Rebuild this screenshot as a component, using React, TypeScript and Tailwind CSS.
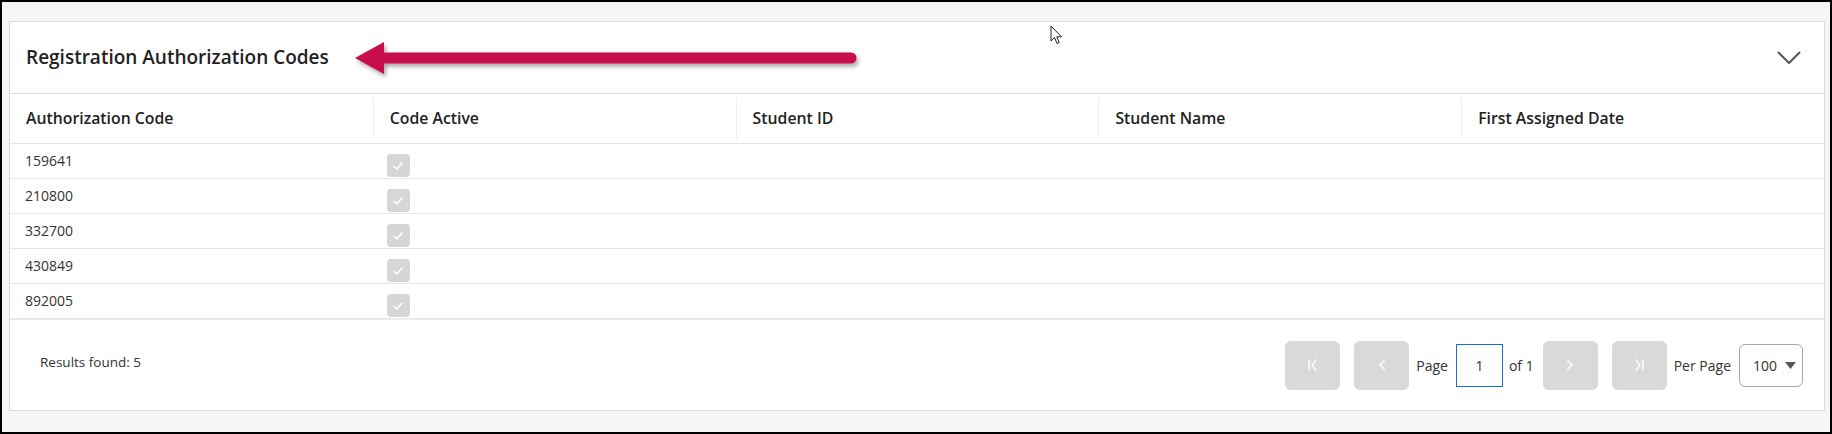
import React from 'react';

interface CodeRow {
  code: string;
  active: boolean;
}

const rows: CodeRow[] = [
  { code: '159641', active: true },
  { code: '210800', active: true },
  { code: '332700', active: true },
  { code: '430849', active: true },
  { code: '892005', active: true },
];

const columns = ['Authorization Code', 'Code Active', 'Student ID', 'Student Name', 'First Assigned Date'];

const PageButton: React.FC<{ kind: 'first' | 'prev' | 'next' | 'last' }> = ({ kind }) => (
  <button className="w-[55px] h-[49px] rounded-[6px] bg-[#d9d9d9] flex items-center justify-center cursor-not-allowed">
    <svg width="14" height="14" viewBox="0 0 14 14" fill="none" stroke="#f5f5f5" strokeWidth="2" strokeLinecap="round" strokeLinejoin="round">
      {kind === 'first' && (
        <>
          <line x1="3" y1="2" x2="3" y2="12" />
          <polyline points="10,2 6,7 10,12" />
        </>
      )}
      {kind === 'prev' && <polyline points="9,3 5,7 9,11" />}
      {kind === 'next' && <polyline points="5,3 9,7 5,11" />}
      {kind === 'last' && (
        <>
          <polyline points="4,2 8,7 4,12" />
          <line x1="11" y1="2" x2="11" y2="12" />
        </>
      )}
    </svg>
  </button>
);

const Checkbox: React.FC = () => (
  <div className="w-[23px] h-[23px] rounded-[4px] bg-[#d6d6d6] flex items-center justify-center mt-[4px] -ml-[2px]">
    <svg width="12" height="10" viewBox="0 0 12 10" fill="none" stroke="#ffffff" strokeWidth="1.6" strokeLinecap="round" strokeLinejoin="round">
      <polyline points="2,5.5 4.8,8 10,2" />
    </svg>
  </div>
);

export default function App() {
  return (
    <div className="w-[1832px] h-[434px] border-2 border-black bg-[#f5f5f5] pl-[7px] pr-[5px] pt-[19px] font-['Open_Sans',sans-serif] text-[#222]">
      <div className="relative bg-white border border-[#dcdcdc] h-[390px] flex flex-col">
        {/* Header */}
        <div className="h-[72px] border-b border-[#dedede] flex items-center justify-between pl-[16px] pr-[23px]">
          <h2 className="text-[19px] font-semibold text-[#222]">Registration Authorization Codes</h2>
          <svg width="24" height="14" viewBox="0 0 24 14" fill="none" stroke="#555" strokeWidth="2" strokeLinecap="round" strokeLinejoin="round">
            <polyline points="1.5,1.5 12,12 22.5,1.5" />
          </svg>
        </div>

        {/* annotation arrow */}
        <svg className="absolute left-[340px] top-[15px]" width="520" height="44" viewBox="0 0 520 44" fill="none">
          <defs>
            <filter id="arrowShadow" x="-5%" y="-40%" width="110%" height="180%">
              <feDropShadow dx="2" dy="3" stdDeviation="2" floodColor="#000" floodOpacity="0.35" />
            </filter>
          </defs>
          <g filter="url(#arrowShadow)">
            <line x1="32" y1="21" x2="501" y2="21" stroke="#c70a4b" strokeWidth="11" strokeLinecap="round" />
            <polygon points="5,21 34,5 34,37" fill="#c70a4b" />
          </g>
        </svg>

        {/* mouse cursor */}
        <svg className="absolute left-[1040px] top-[3px]" width="13" height="20" viewBox="0 0 13 20">
          <path d="M1 1 L1 16 L4.5 12.5 L7 18.5 L9.2 17.6 L6.8 11.8 L11.5 11.8 Z" fill="#fff" stroke="#222" strokeWidth="1" strokeLinejoin="round" />
        </svg>

        {/* Column headers */}
        <div className="grid grid-cols-5 h-[50px] border-b border-[#e6e6e6]">
          {columns.map((col, i) => (
            <div
              key={col}
              className={`flex items-center px-4 my-[4px] text-[15.8px] font-semibold text-[#222] ${i > 0 ? 'border-l border-[#efefef]' : ''}`}
            >
              {col}
            </div>
          ))}
        </div>

        {/* Rows */}
        {rows.map((row) => (
          <div key={row.code} className="grid grid-cols-5 h-[35px] border-b border-[#e8e8e8] text-[14px] text-[#333]">
            <div className="px-[15px] pt-[7px] leading-[20px]">{row.code}</div>
            <div className="px-4 pt-[6px]">{row.active && <Checkbox />}</div>
            <div />
            <div />
            <div />
          </div>
        ))}

        {/* Footer */}
        <div className="flex-1 border-t border-[#ececec] flex items-center justify-between pl-[30px] pr-[21px] text-[14px] text-[#333]">
          <span className="-mt-[6px] text-[13.5px]">Results found: 5</span>
          <div className="flex items-center">
            <PageButton kind="first" />
            <div className="ml-[14px]">
              <PageButton kind="prev" />
            </div>
            <span className="ml-[7px] text-[14px]">Page</span>
            <div className="ml-[8px] w-[47px] h-[43px] border border-[#1a6fc9] flex items-center justify-center text-[14px]">1</div>
            <span className="ml-[6px] text-[14px]">of 1</span>
            <div className="ml-[9px]">
              <PageButton kind="next" />
            </div>
            <div className="ml-[14px]">
              <PageButton kind="last" />
            </div>
            <span className="ml-[7px] text-[14px]">Per Page</span>
            <div className="ml-[8px] w-[64px] h-[43px] border border-[#aaaaaa] rounded-[6px] flex items-center justify-between pl-[13px] pr-[6px] text-[14px]">
              <span>100</span>
              <svg width="11" height="7" viewBox="0 0 11 7">
                <polygon points="0,0 11,0 5.5,7" fill="#555" />
              </svg>
            </div>
          </div>
        </div>
      </div>
    </div>
  );
}
